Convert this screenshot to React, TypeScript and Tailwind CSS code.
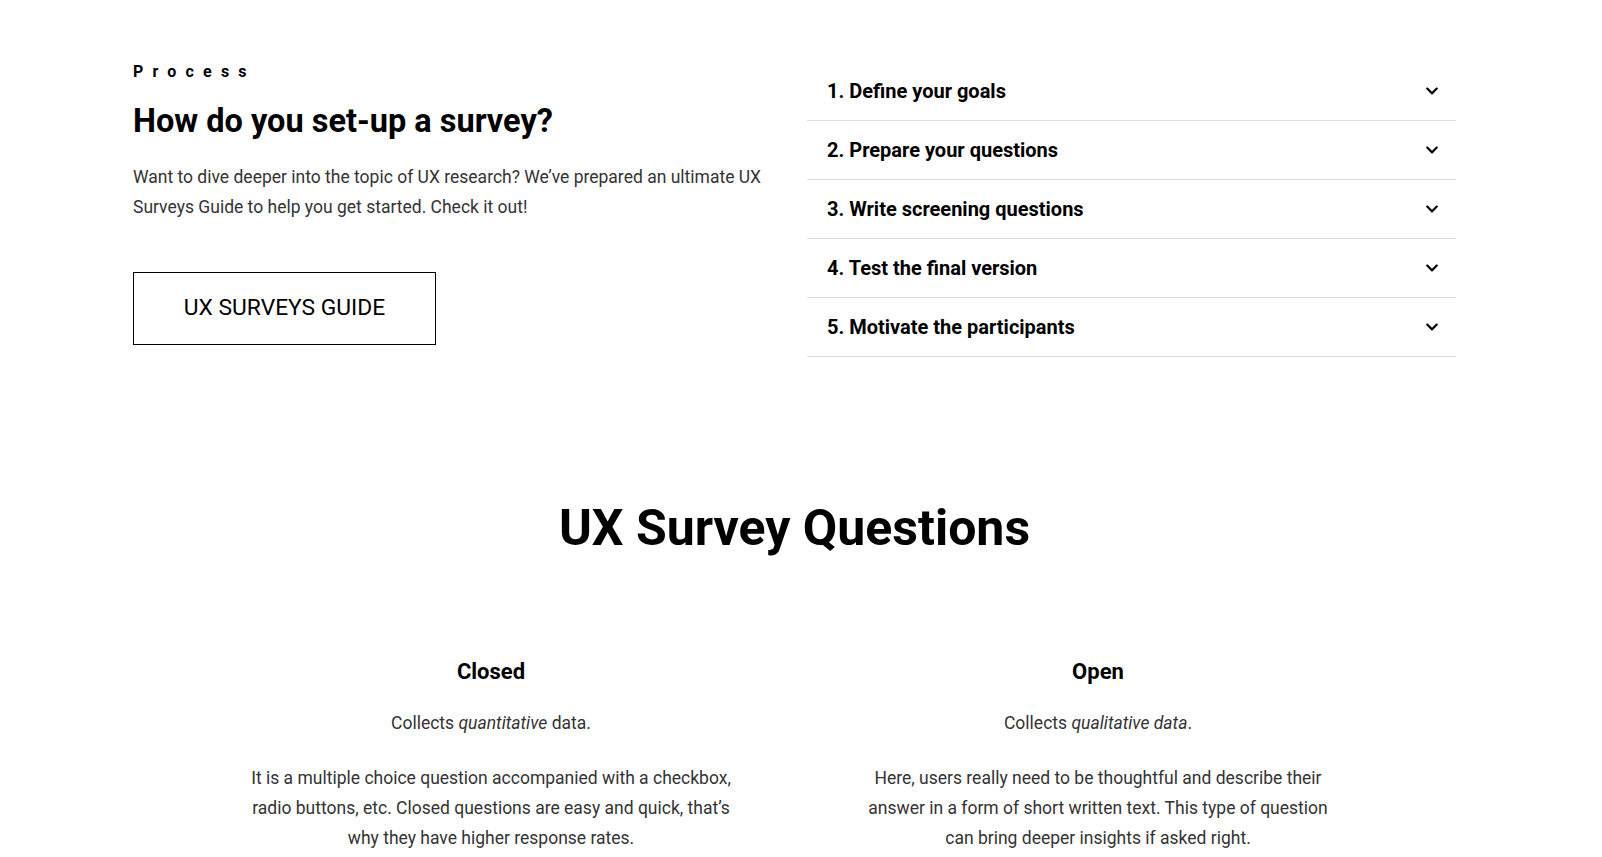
import { FaChevronDown } from "react-icons/fa";

const steps = [
  "1. Define your goals",
  "2. Prepare your questions",
  "3. Write screening questions",
  "4. Test the final version",
  "5. Motivate the participants",
];

export default function App() {
  return (
    <div className="min-h-screen bg-white font-['Roboto','Liberation_Sans',sans-serif] text-black">
      <div className="w-[1589px]">
        {/* process + accordion */}
        <section className="flex px-[133px] pt-[62px]">
          <div className="w-[674px] shrink-0">
            <p className="text-[16px] leading-[20px] font-bold tracking-[9.2px]">Process</p>
            <h2 className="mt-[19px] text-[32.5px] leading-[40px] font-bold">How do you set-up a survey?</h2>
            <p className="mt-[22px] w-[650px] text-[17.5px] leading-[29.5px] text-[#333]">
              Want to dive deeper into the topic of UX research? We’ve prepared an ultimate UX Surveys Guide to
              help you get started. Check it out!
            </p>
            <button className="mt-[50px] flex h-[73px] w-[303px] items-center justify-center border border-black text-[22.8px] text-black">
              UX SURVEYS GUIDE
            </button>
          </div>
          <div className="flex-1">
            {steps.map(s => (
              <div
                key={s}
                className="flex h-[59px] items-center justify-between border-b border-[#dcdcdc] pl-[20px] pr-[17px]"
              >
                <span className="text-[20px] leading-[26px] font-bold">{s}</span>
                <FaChevronDown size={14} />
              </div>
            ))}
          </div>
        </section>

        {/* question types */}
        <section className="pt-[141px]">
          <h2 className="text-center text-[50px] leading-[60px] font-bold">UX Survey Questions</h2>
          <div className="mx-auto mt-[100px] grid w-[1214px] grid-cols-2">
            <div className="flex flex-col items-center text-center">
              <h3 className="text-[22px] leading-[28px] font-bold">Closed</h3>
              <p className="mt-[22px] text-[17.5px] leading-[30px] text-[#333]">
                Collects <em>quantitative</em> data.
              </p>
              <p className="mt-[25px] max-w-[487px] text-[17.5px] leading-[30px] text-[#333]">
                It is a multiple choice question accompanied with a checkbox, radio buttons, etc. Closed questions
                are easy and quick, that’s why they have higher response rates.
              </p>
            </div>
            <div className="flex flex-col items-center text-center">
              <h3 className="text-[22px] leading-[28px] font-bold">Open</h3>
              <p className="mt-[22px] text-[17.5px] leading-[30px] text-[#333]">
                Collects <em>qualitative data</em>.
              </p>
              <p className="mt-[25px] max-w-[487px] text-[17.5px] leading-[30px] text-[#333]">
                Here, users really need to be thoughtful and describe their answer in a form of short written text.
                This type of question can bring deeper insights if asked right.
              </p>
            </div>
          </div>
        </section>
      </div>
    </div>
  );
}
